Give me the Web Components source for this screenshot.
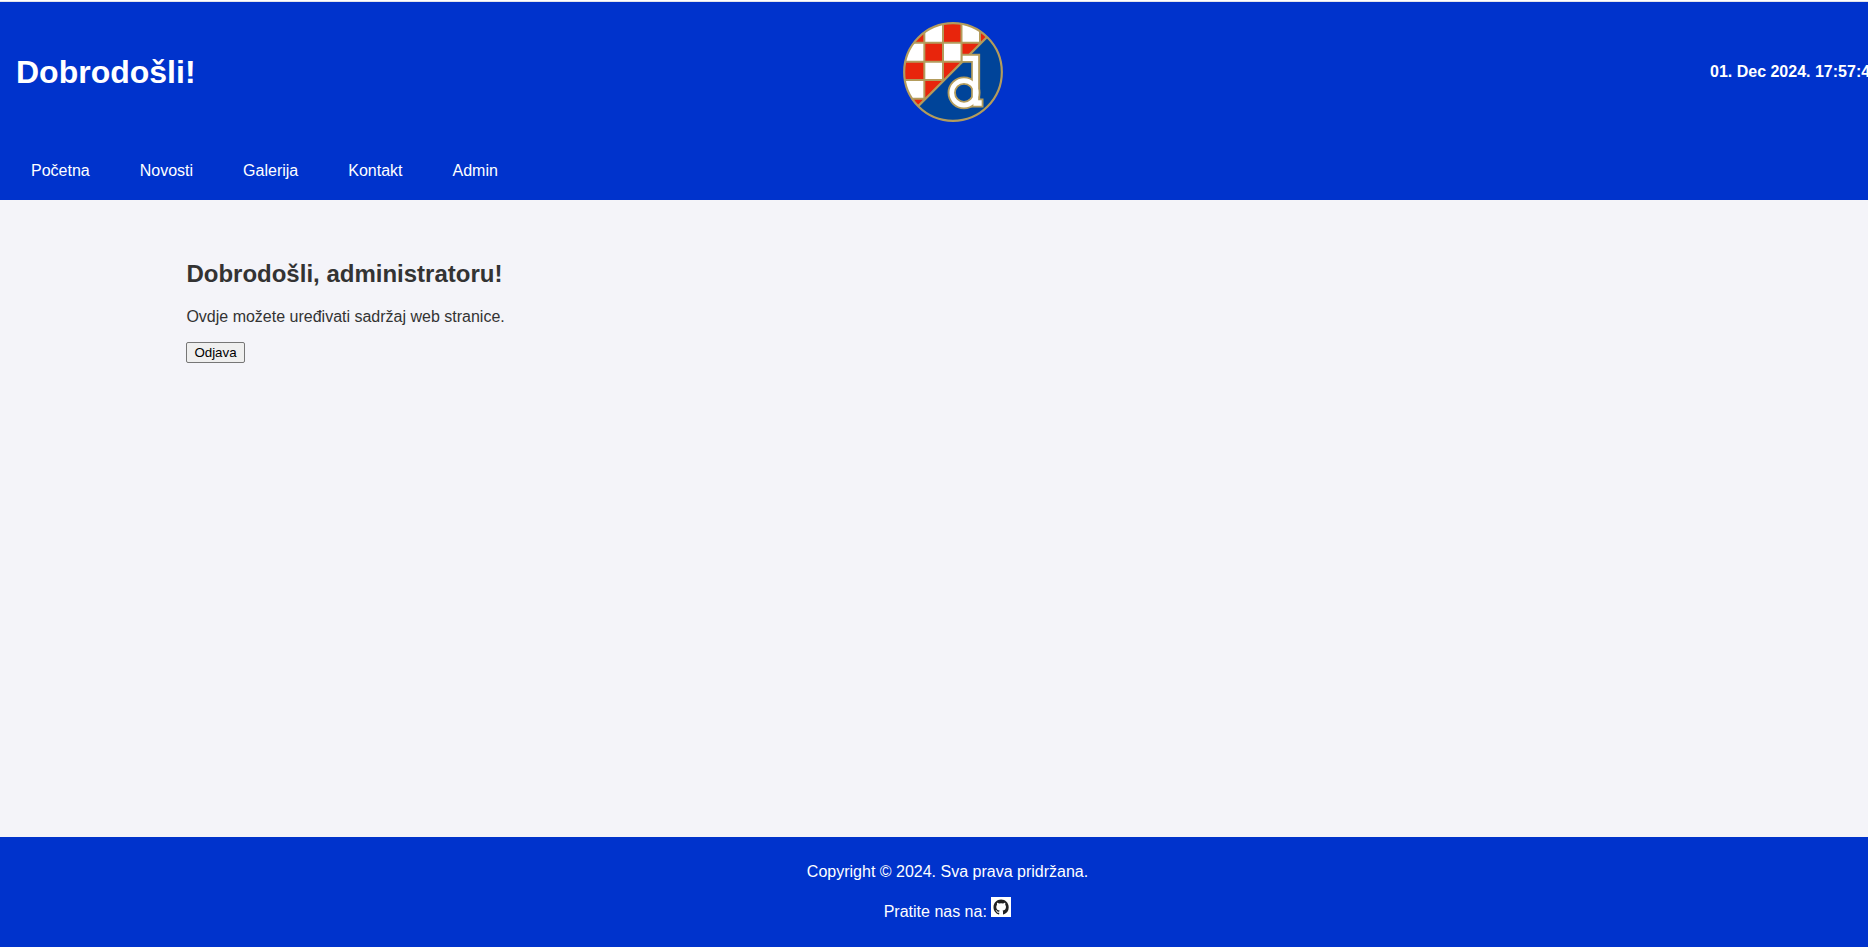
<!DOCTYPE html>
<html lang="hr">
<head>
<meta charset="utf-8">
<title>Admin</title>
<style>
html,body{margin:0;height:100%;overflow:hidden}
body{font:16px/18px "Liberation Sans",Arial,sans-serif;color:#333;background:#f4f4f9}
</style>
</head>
<body>
<admin-page>
  <site-header slot="header" heading="Dobrodošli!" time="01. Dec 2024. 17:57:45"><club-crest></club-crest></site-header>
  <site-nav slot="nav"><a>Početna</a><a>Novosti</a><a>Galerija</a><a>Kontakt</a><a>Admin</a></site-nav>
  <admin-panel slot="main"></admin-panel>
  <site-footer slot="footer"><github-icon></github-icon></site-footer>
</admin-page>
<script>
const define = (name, html) => customElements.define(name, class extends HTMLElement {
  constructor() {
    super();
    this.attachShadow({mode: 'open'}).innerHTML = html;
    this.shadowRoot.querySelectorAll('[data-attr]').forEach(e => e.textContent = this.getAttribute(e.dataset.attr));
  }
});
define('admin-page', `<style>
:host{display:flex;flex-direction:column;box-sizing:border-box;width:1895px;height:947px;border-top:1px solid #fff}
.edge{height:1px;background:#e3e3e8;flex:none}
main{flex:1}
</style><div class="edge"></div><slot name="header"></slot><slot name="nav"></slot><main><slot name="main"></slot></main><slot name="footer"></slot>`);
define('site-header', `<style>
:host{display:grid;grid-template-columns:1fr 100px 1fr;align-items:center;box-sizing:border-box;height:140px;padding:20px 5px 20px 16px;background:#03c;color:#fff}
h1{margin:0;font-size:32px;line-height:36px}
time{font-weight:bold;justify-self:end;margin-right:11px;white-space:nowrap}
</style><h1 data-attr="heading"></h1><slot></slot><time data-attr="time"></time>`);
define('site-nav', `<style>
:host{display:flex;gap:50px;box-sizing:border-box;height:58px;padding:20px 31px;background:#03c;color:#fff}
::slotted(a){color:#fff}
</style><slot></slot>`);
define('admin-panel', `<style>
:host{display:block;padding:60px 186px 0}
h2{margin:0;font-size:24px;line-height:28px}
h2,p{padding-left:.4px}
p{margin:20px 0 16px}
button{display:block;margin:0;box-sizing:border-box;width:59px;height:21px;padding:1px 6px;font:13.333px/15px "Liberation Sans",Arial,sans-serif;color:#000;background:#efefef;border:1px solid #767676;border-radius:2px}
</style><h2>Dobrodošli, administratoru!</h2><p>Ovdje možete uređivati sadržaj web stranice.</p><button>Odjava</button>`);
define('site-footer', `<style>
:host{display:block;box-sizing:border-box;height:110px;padding-top:26px;background:#03c;color:#fff;text-align:center}
p{margin:0 0 16px}
</style><p>Copyright © 2024. Sva prava pridržana.</p><p>Pratite nas na: <slot></slot></p>`);
define('github-icon', `<style>:host{display:inline-block;width:20px;height:20px;background:#fff}svg{display:block}</style>
<svg width="20" height="20" viewBox="0 0 20 20"><path fill="#222" transform="translate(2.5 2.6) scale(.95)" d="M8 0C3.58 0 0 3.58 0 8c0 3.54 2.29 6.53 5.47 7.59.4.07.55-.17.55-.38v-1.49c-2.01.37-2.53-.49-2.69-.94-.09-.23-.48-.94-.82-1.13-.28-.15-.68-.52-.01-.53.63-.01 1.08.58 1.23.82.72 1.21 1.87.87 2.33.66.07-.52.28-.87.51-1.07-1.78-.2-3.64-.89-3.64-3.95 0-.87.31-1.59.82-2.15-.08-.2-.36-1.02.08-2.12 0 0 .67-.21 2.2.82a7.6 7.6 0 0 1 4 0c1.53-1.04 2.2-.82 2.2-.82.44 1.1.16 1.92.08 2.12.51.56.82 1.27.82 2.15 0 3.07-1.87 3.75-3.65 3.95.29.25.54.73.54 1.48v2.2c0 .21.15.46.55.38A8.01 8.01 0 0 0 16 8c0-4.42-3.58-8-8-8z"/></svg>`);
define('club-crest', `<style>:host{display:block;width:100px;height:100px}svg{display:block}</style>
<svg width="100" height="100" viewBox="39 36 300 300">
<defs><clipPath id="c"><circle cx="189" cy="186" r="147"/></clipPath></defs>
<g clip-path="url(#c)">
<rect x="39" y="36" width="300" height="300" fill="#fff"/>
<path fill="#e8250c" d="M39 36h64v62H39zM159 36h55v62h-55zM270 36h60v62h-60zM103 98h56v57h-56zM214 98h56v57h-56zM39 155h64v55H39zM159 155h55v55h-55zM103 210h56v56h-56zM39 266h64v60H39z"/>
<path stroke="#b39c5c" stroke-width="6" d="M103 30v250M159 30v190M214.500 30v130M270 30v80M39 98.500h240M39 155h180M39 210h130M39 266h70"/>
<path fill="#004499" stroke="#b39c5c" stroke-width="7" d="M330 42L47 326L189 380H380V42z"/>
</g>
<circle cx="189" cy="186" r="146.500" fill="none" stroke="#b39c5c" stroke-width="6.500"/>
<g fill="none" stroke="#b39c5c"><circle cx="222" cy="248.500" r="36.800" stroke-width="25"/><path stroke-width="27" d="M213 145h44v134M243.500 279h37"/></g>
<g fill="none" stroke="#fff"><circle cx="222" cy="248.500" r="36.800" stroke-width="14"/><path stroke-width="16" d="M218 145h38.500v134M250 279h25"/></g>
</svg>`);
</script>
</body>
</html>
